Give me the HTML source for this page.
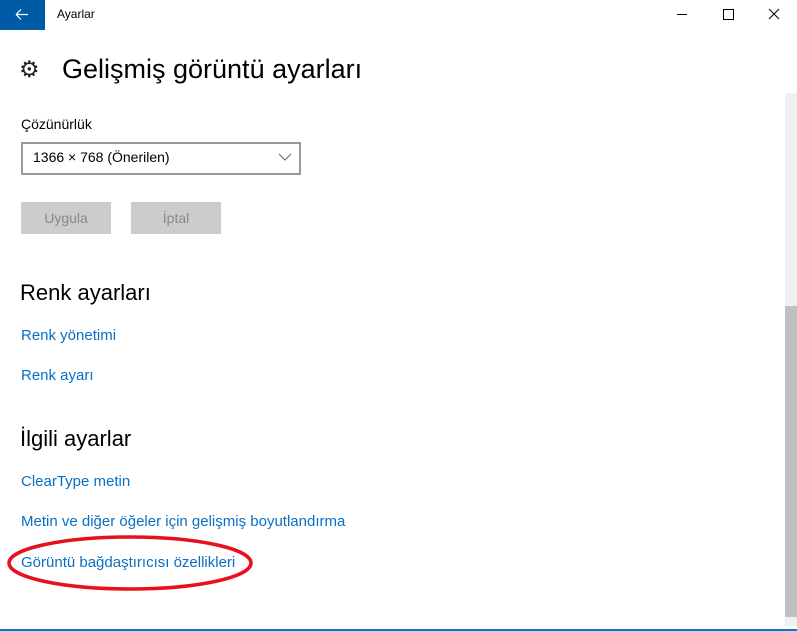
<!DOCTYPE html>
<html><head><meta charset="utf-8"><style>
body{margin:0;width:797px;height:631px;overflow:hidden;background:#fff;font-family:"Liberation Sans",sans-serif;position:relative}
.a{position:absolute;white-space:nowrap}
.link{color:#0a6fc4;font-size:15px}
</style></head><body>
<div class="a" style="left:0;top:0;width:45px;height:30px;background:#005ba6"></div>
<svg class="a" style="left:14px;top:7px" width="16" height="16"><path d="M2 7.5H14M2 7.5L7 2.5M2 7.5L7 12.5" stroke="#fff" stroke-width="1.2" fill="none"/></svg>
<div class="a" style="left:57px;top:7px;font-size:12px;color:#000">Ayarlar</div>
<div class="a" style="left:677px;top:14px;width:10px;height:1px;background:#000"></div>
<div class="a" style="left:723px;top:9px;width:9px;height:9px;border:1px solid #000"></div>
<svg class="a" style="left:768px;top:8px" width="12" height="12"><path d="M1 1L11 11M11 1L1 11" stroke="#000" stroke-width="1"/></svg>
<div class="a" style="left:19px;top:56px;font-size:23px;color:#222">⚙</div>
<div class="a" style="left:62px;top:54px;font-size:27px;color:#000">Gelişmiş görüntü ayarları</div>
<div class="a" style="left:21px;top:116px;font-size:14px;color:#000">Çözünürlük</div>
<div class="a" style="left:21px;top:142px;width:276px;height:29px;border:2px solid #999"></div>
<div class="a" style="left:33px;top:149px;font-size:14px;color:#000">1366 × 768 (Önerilen)</div>
<svg class="a" style="left:278px;top:152px" width="14" height="10"><path d="M1 2L7 8L13 2" stroke="#666" fill="none"/></svg>
<div class="a" style="left:21px;top:202px;width:90px;height:32px;background:#ccc;color:#888;font-size:14px;text-align:center;line-height:32px">Uygula</div>
<div class="a" style="left:131px;top:202px;width:90px;height:32px;background:#ccc;color:#888;font-size:14px;text-align:center;line-height:32px">İptal</div>
<div class="a" style="left:20px;top:280px;font-size:22px;color:#000">Renk ayarları</div>
<div class="a link" style="left:21px;top:327px">Renk yönetimi</div>
<div class="a link" style="left:21px;top:367px">Renk ayarı</div>
<div class="a" style="left:20px;top:426px;font-size:22px;color:#000">İlgili ayarlar</div>
<div class="a link" style="left:21px;top:473px">ClearType metin</div>
<div class="a link" style="left:21px;top:513px">Metin ve diğer öğeler için gelişmiş boyutlandırma</div>
<div class="a link" style="left:21px;top:554px">Görüntü bağdaştırıcısı özellikleri</div>
<svg class="a" style="left:0;top:525px" width="270" height="80"><ellipse cx="130" cy="38" rx="121" ry="26" stroke="#e8101c" stroke-width="3.5" fill="none"/></svg>
<div class="a" style="left:785px;top:93px;width:12px;height:533px;background:#f0f0f0"></div>
<div class="a" style="left:785px;top:306px;width:12px;height:311px;background:#c0c0c0"></div>
<div class="a" style="left:0;top:629px;width:797px;height:2px;background:#0078d7"></div>
</body></html>
